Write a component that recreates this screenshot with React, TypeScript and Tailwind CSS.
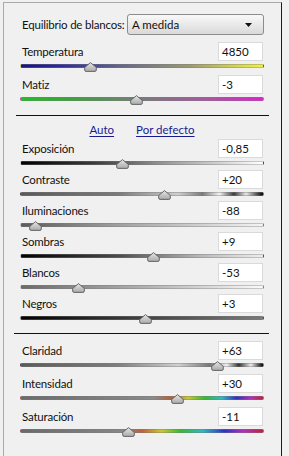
import React from "react";

type Row = {
  label: string;
  value: string;
  track: string;
  thumb: number; // absolute x center in page
};

const FONT = { fontFamily: "Lato, 'Liberation Sans', Arial, sans-serif" };

function Thumb({ x }: { x: number }) {
  return (
    <svg
      width="13"
      height="10"
      viewBox="0 0 13 10"
      className="absolute top-[1px]"
      style={{ left: x - 20 - 6.5 }}
    >
      <defs>
        <linearGradient id="tg" x1="0" y1="0" x2="0" y2="1">
          <stop offset="0" stopColor="#e6e6e6" />
          <stop offset="1" stopColor="#a9a9a9" />
        </linearGradient>
      </defs>
      <path
        d="M6.5 0.6 L12.3 5.4 L12.3 8 Q12.3 9.4 10.9 9.4 L2.1 9.4 Q0.7 9.4 0.7 8 L0.7 5.4 Z"
        fill="url(#tg)"
        stroke="#5a5a5a"
        strokeWidth="0.9"
      />
    </svg>
  );
}

function SliderRow({ row, area }: { row: Row; area: "s" | "l" }) {
  return (
    <div>
      <div className="flex items-center justify-between h-[19px]">
        <span className="ml-[2px] text-[11.5px] leading-[14px] tracking-[-0.2px] text-[#111] whitespace-nowrap">{row.label}</span>
        <div className="w-[45px] h-[19px] mr-[1px] bg-white border border-[#dadada] flex items-center pl-[3px] text-[11.5px] leading-[14px] text-[#111]">
          {row.value}
        </div>
      </div>
      <div className={area === "s" ? "relative h-[12px] pt-[3px]" : "relative h-[14px] pt-[3px]"}>
        <div className={`h-[4px] rounded-full border border-[#7a7a7a]/40 ${row.track}`} />
        <Thumb x={row.thumb} />
      </div>
    </div>
  );
}

const top: Row[] = [
  {
    label: "Temperatura",
    value: "4850",
    track: "bg-[linear-gradient(to_right,#15157e,#2a2a9a_15%,#6d6d88_45%,#9c9c70_70%,#d8d850_90%,#f2f23a)]",
    thumb: 90,
  },
  {
    label: "Matiz",
    value: "-3",
    track: "bg-[linear-gradient(to_right,#1fc21f,#3aa53a_20%,#7a7a7a_50%,#a65aa0_75%,#e21fd2)]",
    thumb: 136,
  },
];

const mid: Row[] = [
  {
    label: "Exposición",
    value: "-0,85",
    track: "bg-[linear-gradient(to_right,#000,#3a3a3a_30%,#9a9a9a_60%,#fff)]",
    thumb: 122,
  },
  {
    label: "Contraste",
    value: "+20",
    track: "bg-[linear-gradient(to_right,#5a5a5a,#7a7a7a_40%,#cfcfcf_65%,#7a7a7a_75%,#f2f2f2_82%,#3a3a3a_88%,#e8e8e8_93%,#000)]",
    thumb: 164,
  },
  {
    label: "Iluminaciones",
    value: "-88",
    track: "bg-[linear-gradient(to_right,#5c5c5c,#a8a8a8_45%,#f4f4f4)]",
    thumb: 35,
  },
  {
    label: "Sombras",
    value: "+9",
    track: "bg-[linear-gradient(to_right,#000,#4a4a4a_40%,#bcbcbc_75%,#eeeeee)]",
    thumb: 153,
  },
  {
    label: "Blancos",
    value: "-53",
    track: "bg-[linear-gradient(to_right,#6a6a6a,#b0b0b0_50%,#fafafa)]",
    thumb: 78,
  },
  {
    label: "Negros",
    value: "+3",
    track: "bg-[linear-gradient(to_right,#000,#3c3c3c_45%,#7a7a7a)]",
    thumb: 145,
  },
];

const bottom: Row[] = [
  {
    label: "Claridad",
    value: "+63",
    track: "bg-[linear-gradient(to_right,#5a5a5a,#7e7e7e_40%,#d0d0d0_65%,#777_78%,#f0f0f0_85%,#333_90%,#ececec_95%,#000)]",
    thumb: 217,
  },
  {
    label: "Intensidad",
    value: "+30",
    track: "bg-[linear-gradient(to_right,#6a6a6a,#8a8a8a_55%,#b0603a_62%,#c8c830_69%,#35b835_76%,#30b8c0_83%,#3030c0_89%,#b030b8_95%,#c0203c)]",
    thumb: 177,
  },
  {
    label: "Saturación",
    value: "-11",
    track: "bg-[linear-gradient(to_right,#6a6a6a,#878787_42%,#c0603a_50%,#c8c830_58%,#35b835_66%,#30b8c0_75%,#3030c0_84%,#b030b8_92%,#c0203c)]",
    thumb: 128,
  },
];

export default function App() {
  return (
    <div className="w-[289px] h-[456px] bg-[#f0f0f0] pt-[2px] pl-[3px] overflow-hidden" style={FONT}>
      <div className="w-[279px] h-[456px] border-l border-t border-r border-l-[#a9a9a9] border-t-[#a9a9a9] border-r-[#1c1c1c] bg-[#f0f0f0] pl-[16px] pr-[17px]">
        {/* White balance */}
        <div className="mt-[11px] flex items-center h-[21px]">
          <span className="ml-[2px] text-[11.5px] leading-[14px] tracking-[-0.2px] text-[#111] whitespace-nowrap">Equilibrio de blancos:</span>
          <div className="w-[137px] h-[21px] ml-auto rounded-[3px] border border-[#8c8c8c] bg-[linear-gradient(to_bottom,#f9f9f9,#e9e9e9_50%,#d9d9d9)] flex items-center pl-[4px] pr-[11px] text-[11.5px] leading-[14px] text-[#111]">
            <span className="flex-1">A medida</span>
            <svg width="7" height="4" viewBox="0 0 7 4">
              <path d="M0 0 L7 0 L3.5 4 Z" fill="#111" />
            </svg>
          </div>
        </div>

        <div className="mt-[7px]">
          {top.map((r) => (
            <SliderRow key={r.label} row={r} area="l" />
          ))}
        </div>

        <div className="mt-[7px] -ml-[4px] -mr-[5px] h-px bg-[#111]" />

        <div className="h-[23px] pt-[7px] flex justify-center gap-[22px] text-[11.5px] leading-[14px] text-[#1a1a90]">
          <span className="underline underline-offset-2">Auto</span>
          <span className="underline underline-offset-2">Por defecto</span>
        </div>

        <div>
          {mid.map((r) => (
            <SliderRow key={r.label} row={r} area="s" />
          ))}
        </div>

        <div className="mt-[8px] -ml-[6px] -mr-[5px] h-px bg-[#111]" />

        <div className="mt-[7px]">
          {bottom.map((r) => (
            <SliderRow key={r.label} row={r} area="l" />
          ))}
        </div>
      </div>
    </div>
  );
}
